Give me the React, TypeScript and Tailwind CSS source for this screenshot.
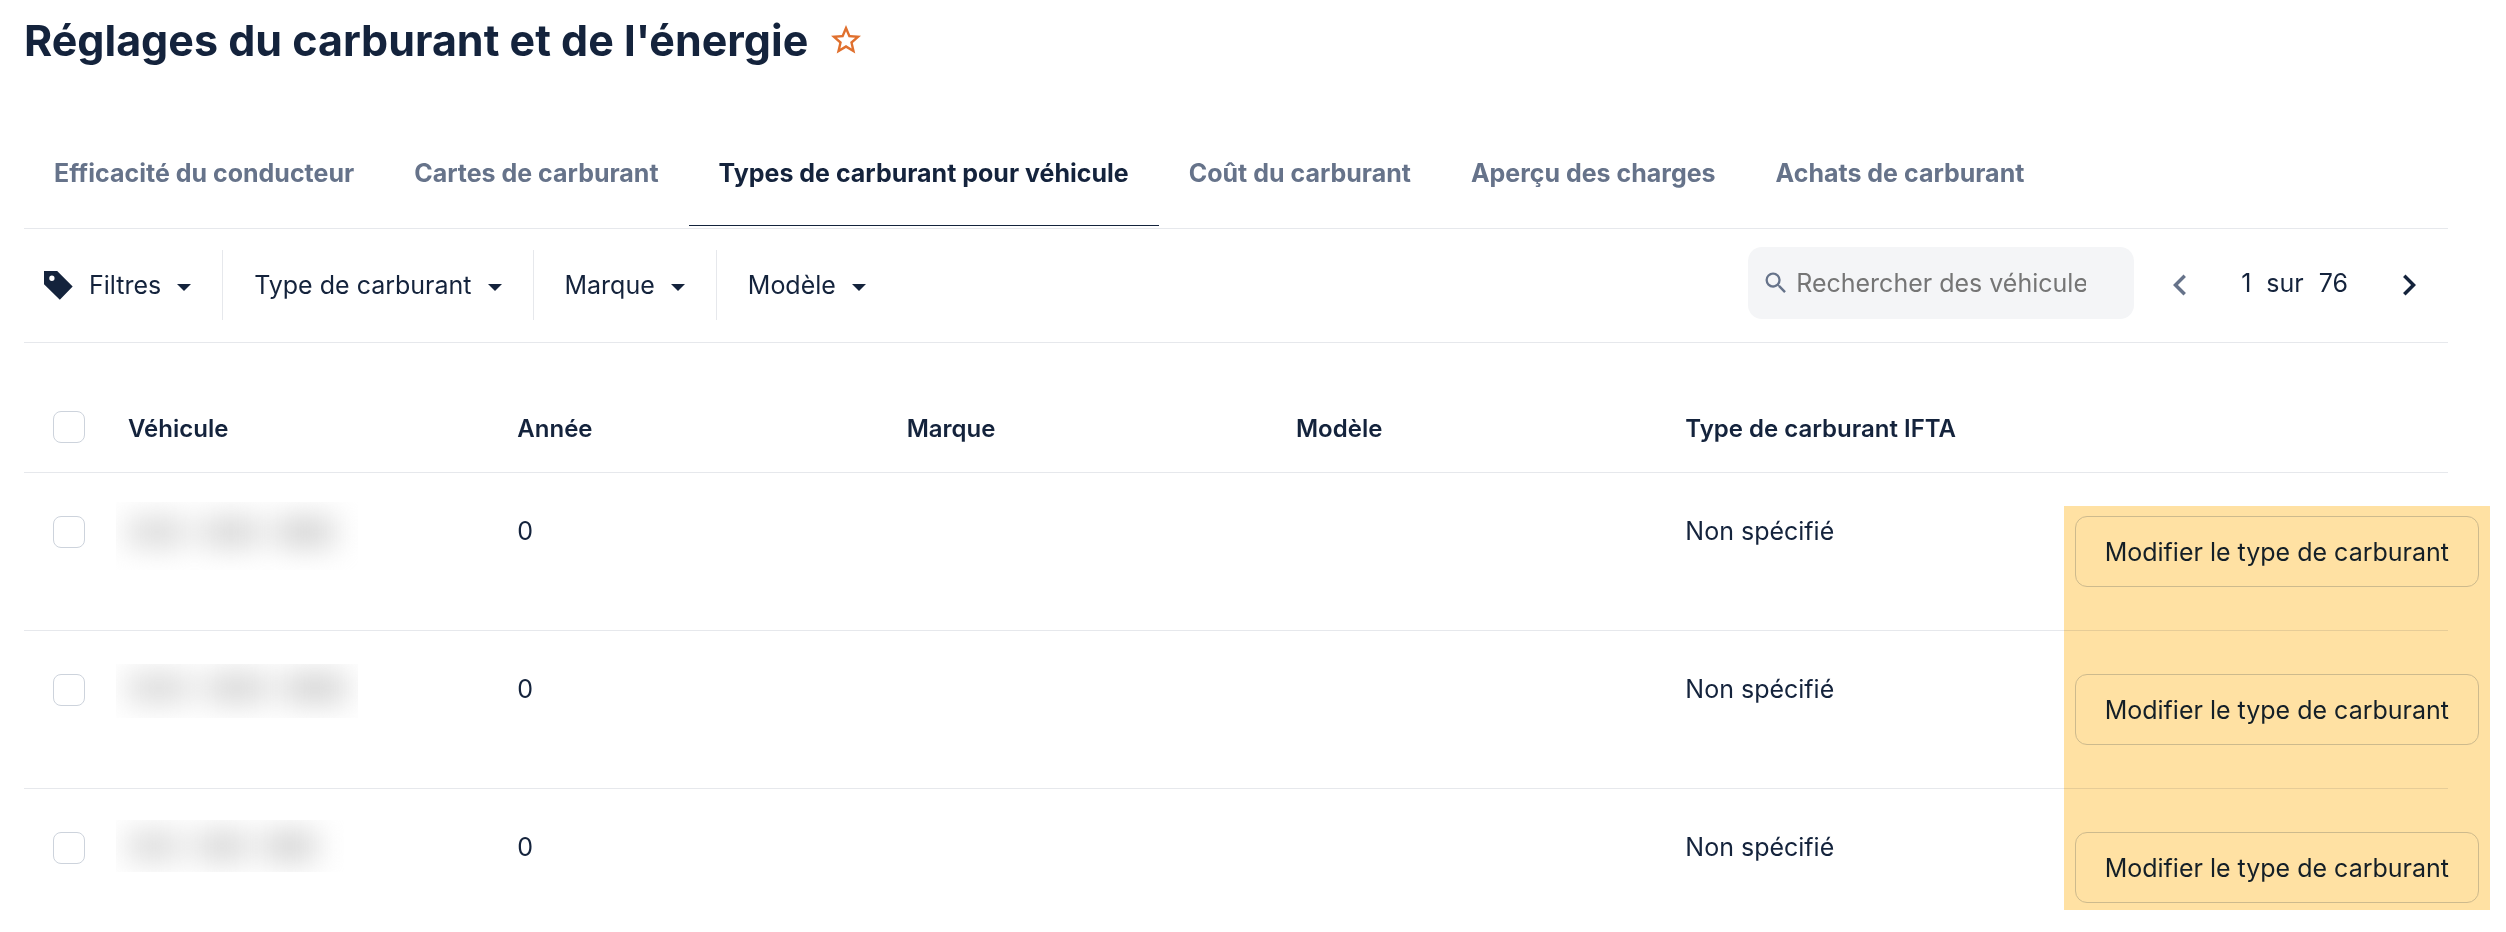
import { MdChevronLeft, MdChevronRight, MdSearch, MdStarBorder } from "react-icons/md";

const tabs = [
  "Efficacité du conducteur",
  "Cartes de carburant",
  "Types de carburant pour véhicule",
  "Coût du carburant",
  "Aperçu des charges",
  "Achats de carburant",
];
const activeTab = "Types de carburant pour véhicule";

const filters = ["Type de carburant", "Marque", "Modèle"];
const columns = ["Véhicule", "Année", "Marque", "Modèle", "Type de carburant IFTA"];

const vehicles = [
  { id: 1, year: "0", fuel: "Non spécifié", mask: "h-[68px] w-[242px] pt-4", bar: "w-[58px]" },
  { id: 2, year: "0", fuel: "Non spécifié", mask: "mt-1 h-[54px] w-[242px] pt-2.5", bar: "w-[62px]" },
  { id: 3, year: "0", fuel: "Non spécifié", mask: "mt-0.5 h-[52px] w-[228px] pt-3", bar: "w-[52px]" },
];

function Caret() {
  return (
    <svg viewBox="0 0 14 7" className="mt-1 h-[7px] w-3.5 fill-current" aria-hidden="true">
      <path d="M0 0h14L7 7z" />
    </svg>
  );
}

function TagIcon() {
  return (
    <svg viewBox="0 0 88 88" className="size-[29px] fill-current" aria-hidden="true">
      <path
        fillRule="evenodd"
        d="M0 0H40L87 47L48 87L0 40ZM24 14a8 8 0 1 0 0 16a8 8 0 1 0 0-16Z"
      />
    </svg>
  );
}

function Checkbox({ label }: { label: string }) {
  return (
    <input
      type="checkbox"
      aria-label={label}
      className="block size-8 appearance-none rounded-lg border border-[#cdd3dc] bg-white"
    />
  );
}

function HiddenName({ mask, bar }: { mask: string; bar: string }) {
  return (
    <div className={`-ml-3 overflow-hidden ${mask}`}>
      <div className="flex gap-4 px-3 blur-[15px]">
        <div className={`h-7 bg-[#d8d8d8] ${bar}`} />
        <div className={`h-7 bg-[#d4d4d4] ${bar}`} />
        <div className={`h-7 bg-[#d0d0d0] ${bar}`} />
      </div>
    </div>
  );
}

export default function App() {
  return (
    <main className="bg-white pr-[58px] pl-6 font-['Inter',sans-serif] text-[25px] leading-10 text-[#14233c]">
      <header className="flex items-center gap-5 pt-3">
        <h1 className="text-[43px] leading-[56px] font-bold">Réglages du carburant et de l'énergie</h1>
        <button type="button" aria-label="Ajouter aux favoris" className="text-[#e0702e]">
          <MdStarBorder className="size-9" />
        </button>
      </header>

      <nav className="mt-12 flex border-b border-[#e6e8ec] pb-0.5">
        {tabs.map((tab) => (
          <a
            key={tab}
            href="#"
            aria-current={tab === activeTab ? "page" : undefined}
            className={`border-b px-[30px] pt-[37px] pb-8 font-bold whitespace-nowrap ${
              tab === activeTab ? "border-[#14233c]" : "border-transparent text-[#66738a]"
            }`}
          >
            {tab}
          </a>
        ))}
      </nav>

      <div className="flex items-center justify-between border-b border-[#e6e8ec] pt-[18px] pb-[19px]">
        <div className="flex">
          <button type="button" className="flex h-[70px] items-center gap-4 pr-[31px] pl-5">
            <TagIcon />
            <span>Filtres</span>
            <Caret />
          </button>
          {filters.map((filter) => (
            <button
              key={filter}
              type="button"
              className="flex h-[70px] items-center gap-4 border-l border-[#e6e8ec] px-[31px]"
            >
              <span>{filter}</span>
              <Caret />
            </button>
          ))}
        </div>

        <div className="flex items-center pr-[18px]">
          <label className="mb-1 flex h-[72px] w-[386px] items-center gap-1.5 rounded-[14px] bg-[#f4f5f7] pr-12 pl-3.5">
            <MdSearch className="size-7 shrink-0 text-[#66738a]" />
            <input
              type="text"
              aria-label="Rechercher des véhicules"
              placeholder="Rechercher des véhicules"
              className="min-w-0 flex-1 bg-transparent outline-none placeholder:text-[#757575]"
            />
          </label>
          <button type="button" aria-label="Page précédente" className="ml-[25px] text-[#66738a]">
            <MdChevronLeft className="size-[42px]" />
          </button>
          <div className="mx-10 mb-1 flex gap-[15px]">
            <span>1</span>
            <span>sur</span>
            <span>76</span>
          </div>
          <button type="button" aria-label="Page suivante">
            <MdChevronRight className="size-[42px]" />
          </button>
        </div>
      </div>

      <div className="relative">
        <table className="w-full table-fixed border-collapse text-left">
          <thead>
            <tr className="border-b border-[#e6e8ec] align-top text-2xl leading-8">
              <th className="w-[88px] pt-[68px] pb-[29px] pl-[29px]">
                <Checkbox label="Tout sélectionner" />
              </th>
              {columns.map((column) => (
                <th key={column} className="px-4 pt-[70px] font-semibold">
                  {column}
                </th>
              ))}
              <th aria-label="Actions" />
            </tr>
          </thead>
          <tbody>
            {vehicles.map((vehicle) => (
              <tr
                key={vehicle.id}
                className="h-[158px] border-b border-[#e6e8ec] align-top last:border-b-0"
              >
                <td className="pt-[43px] pl-[29px]">
                  <Checkbox label={`Sélectionner le véhicule ${vehicle.id}`} />
                </td>
                <td className="px-4 pt-[29px]">
                  <HiddenName mask={vehicle.mask} bar={vehicle.bar} />
                </td>
                <td className="px-4 pt-[38px]">{vehicle.year}</td>
                <td />
                <td />
                <td className="px-4 pt-[38px]">{vehicle.fuel}</td>
                <td className="px-4 pt-[43px]">
                  <button
                    type="button"
                    className="block h-[71px] w-max rounded-xl border border-[#cdd3dc] px-[29px]"
                  >
                    Modifier le type de carburant
                  </button>
                </td>
              </tr>
            ))}
          </tbody>
        </table>
        <div className="pointer-events-none absolute top-[163px] -right-[42px] h-[404px] w-[426px] bg-[#ffe1a3] mix-blend-multiply" />
      </div>
    </main>
  );
}
